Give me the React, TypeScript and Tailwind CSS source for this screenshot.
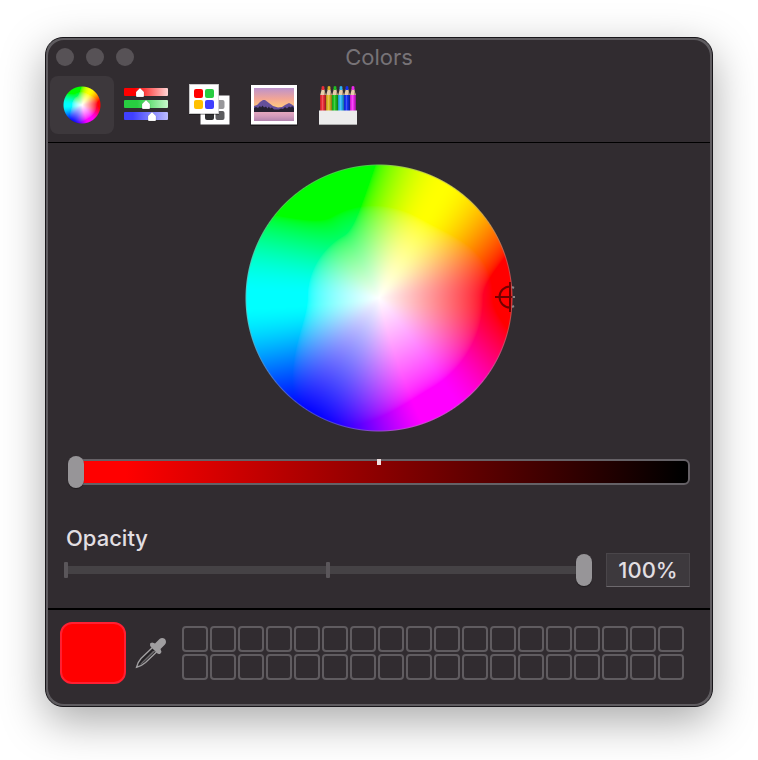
import React, { useEffect, useRef, useState } from 'react';

const clamp = (n: number) => Math.min(1, Math.max(0, n));
const smooth = (n: number) => n * n * (3 - 2 * n);
const toLinear = (c: number) => (c <= 0.04045 ? c / 12.92 : ((c + 0.055) / 1.055) ** 2.4);
const toGamma = (c: number) => (c <= 0.0031308 ? c * 12.92 : 1.055 * c ** (1 / 2.4) - 0.055);

// hue in degrees, saturation 0-1. The wheel is wide gamut (P3), clipped to sRGB
const wheelColor = (hue: number, sat: number) => {
  const channel = (n: number) => {
    const k = (n + hue / 60) % 6;
    return toLinear(1 - sat * smooth(clamp(Math.min(k, 4 - k))));
  };
  const r = channel(5);
  const g = channel(3);
  const b = channel(1);
  return [
    1.2249 * r - 0.2249 * g,
    -0.042 * r + 1.042 * g,
    -0.0196 * r - 0.0786 * g + 1.0982 * b,
  ].map(c => Math.round(toGamma(clamp(c)) * 255));
};

const ColorWheel: React.FC<{ size: number; ring?: number }> = ({ size, ring = 0 }) => {
  const ref = useRef<HTMLCanvasElement>(null);

  useEffect(() => {
    const ctx = ref.current?.getContext('2d');
    if (!ctx) return;
    const img = ctx.createImageData(size, size);
    const mid = size / 2;
    for (let y = 0; y < size; y++) {
      for (let x = 0; x < size; x++) {
        const dx = x + 0.5 - mid;
        const dy = mid - y - 0.5;
        const dist = Math.hypot(dx, dy);
        const hue = ((Math.atan2(dy, dx) * 180) / Math.PI + 360) % 360;
        const mix = ring * clamp(dist - mid + 2);
        const [r, g, b] = wheelColor(hue, Math.min(1, dist / mid)).map(c => c + (150 - c) * mix);
        img.data.set([r, g, b, clamp(mid - dist) * 255], (y * size + x) * 4);
      }
    }
    ctx.putImageData(img, 0, 0);
  }, [size, ring]);

  return <canvas ref={ref} width={size} height={size} />;
};

const SlidersIcon = () => (
  <svg width="44" height="36" viewBox="0 0 44 36">
    <defs>
      <linearGradient id="sr"><stop offset="0.25" stopColor="#ff0000" /><stop offset="1" stopColor="#ffd5d5" /></linearGradient>
      <linearGradient id="sg"><stop offset="0.3" stopColor="#28cd41" /><stop offset="1" stopColor="#c8f8cc" /></linearGradient>
      <linearGradient id="sb"><stop offset="0.2" stopColor="#4040ff" /><stop offset="1" stopColor="#bcbcff" /></linearGradient>
    </defs>
    <rect y="1" width="44" height="8" rx="1" fill="url(#sr)" />
    <rect y="13" width="44" height="8" rx="1" fill="url(#sg)" />
    <rect y="25" width="44" height="8" rx="1" fill="url(#sb)" />
    {[[16, 1], [22, 13], [28, 25]].map(([x, y]) => (
      <path key={x} d={`M${x} ${y}l4 4v4q0 1-1 1h-6q-1 0-1-1v-4z`} fill="#fff" stroke="#00000030" strokeWidth="0.6" />
    ))}
  </svg>
);

const PalettesIcon = () => (
  <svg width="44" height="44" viewBox="0 0 44 44">
    <rect x="12.500" y="12.500" width="29" height="29" fill="#fff" />
    <rect x="17" y="17" width="9" height="9" rx="2" fill="#bbb" />
    <rect x="27.500" y="17" width="9" height="9" rx="2" fill="#98989b" />
    <rect x="17" y="28" width="9" height="9" rx="2" fill="#303032" />
    <rect x="27.500" y="28" width="9" height="9" rx="2" fill="#5c5c5f" />
    <rect x="1" y="2" width="30" height="30" fill="#00000055" />
    <rect x="1.250" y="1.250" width="29.500" height="29.500" fill="#fff" stroke="#ccc" strokeWidth="0.5" />
    <rect x="6" y="6" width="9" height="9" rx="2" fill="#f00" />
    <rect x="17" y="6" width="9" height="9" rx="2" fill="#28cd41" />
    <rect x="6" y="17" width="9" height="9" rx="2" fill="#ffc000" />
    <rect x="17" y="17" width="9" height="9" rx="2" fill="#4040ff" />
  </svg>
);

const PhotoIcon = () => (
  <svg width="48" height="42" viewBox="0 0 48 42">
    <defs>
      <linearGradient id="sky" x2="0" y2="1">
        <stop offset="0" stopColor="#bd93cc" /><stop offset="0.45" stopColor="#f2a596" /><stop offset="0.85" stopColor="#ffcf7c" />
      </linearGradient>
      <linearGradient id="lake" x2="0" y2="1">
        <stop offset="0" stopColor="#e9abc0" /><stop offset="0.5" stopColor="#d39bbb" /><stop offset="1" stopColor="#b183ae" />
      </linearGradient>
    </defs>
    <rect x="0.500" y="1" width="47" height="41" fill="#1c191c" />
    <rect x="1" y="1" width="46" height="39.500" fill="#fff" />
    <rect x="4" y="4" width="40" height="24" fill="url(#sky)" />
    <rect x="4" y="27" width="40" height="10" fill="url(#lake)" />
    <path d="M4 22l3-1 3-3 3-2 2 0 4 3 4 3 5 1.500 4-0.500 3-2 4-2 2 1 3 2v6H4z" fill="#65509b" />
    <path d="M4 24l2-1 2 1 2-2 1 1.500 1.500-2 1.500 2 2-1 1.500 2 1.500-2 1 2 2-1 2 2h5l2-1 2 0.500 2-2 2 1.500 2-2 2 1 1-1.500 2 2v4H4z" fill="#252131" />
  </svg>
);

const pencils = ['#ea2e38', '#dcb424', '#20bf22', '#2bb4f0', '#1530f0', '#ef28ee'];

const PencilsIcon = () => (
  <svg width="40" height="42" viewBox="0 0 40 42">
    {pencils.map((color, i) => (
      <g key={color} transform={`translate(${2 + i * 6} 0)`}>
        <path d="M0 12L1.800 5h2.400L6 12z" fill="#e6cdaa" />
        <path d="M4 6l2 6h-2z" fill="#b5977a" />
        <path d="M1.600 6V2.800Q3 1 4.400 2.800V6z" fill={color} />
        <rect y="11" width="6" height="17" fill={color} />
        <rect x="4.500" y="11" width="1.500" height="17" fill="#00000050" />
        <rect x="0" y="11" width="1" height="17" fill="#00000025" />
        <rect x="2" y="11" width="1" height="17" fill="#ffffff30" />
      </g>
    ))}
    <rect x="1" y="26.500" width="38" height="14" fill="#ececec" />
    <rect x="1" y="40" width="38" height="1" fill="#aaa" />
  </svg>
);

const EyedropperIcon = () => (
  <svg width="32" height="32" viewBox="0 0 32 32">
    <path d="M18 10L6 21.500Q2.500 25.500 1.500 30.300Q6.500 29 10.500 25.500L22.500 14z" fill="#242124" stroke="#a09ea0" strokeWidth="1.400" />
    <path d="M18 14L8 24Q5.500 26.500 4.500 28Q7.500 26.500 9.500 24.500L20.500 14z" fill="#6a676a" />
    <path d="M15 6.500L17 5.500Q19 6 20 6.500L24.500 2Q27 0 30 2Q32 5 30 7.500L25.500 12L26.500 15L25 17Q23 17.500 21.500 15.500L16.500 10.500Q14.500 8.500 15 6.500z" fill="#a09ea0" />
  </svg>
);

const tabs = [
  { name: 'Color Wheel', icon: <ColorWheel size={38} /> },
  { name: 'Color Sliders', icon: <SlidersIcon /> },
  { name: 'Color Palettes', icon: <PalettesIcon /> },
  { name: 'Image Palettes', icon: <PhotoIcon /> },
  { name: 'Pencils', icon: <PencilsIcon /> },
];

const sliderClass =
  'col-start-1 row-start-1 z-10 h-8 w-full appearance-none bg-transparent outline-none [&::-webkit-slider-thumb]:h-8 [&::-webkit-slider-thumb]:w-4 [&::-webkit-slider-thumb]:appearance-none [&::-webkit-slider-thumb]:rounded-full [&::-webkit-slider-thumb]:bg-[#979598] [&::-webkit-slider-thumb]:shadow-[0_1px_1px_rgba(0,0,0,0.4)]';

const App: React.FC = () => {
  const [activeTab, setActiveTab] = useState('Color Wheel');
  const [brightness, setBrightness] = useState(0);
  const [opacity, setOpacity] = useState(100);

  return (
    <div className="min-h-screen bg-white px-[45px] pt-[37px] pb-[53px] font-['Inter','Liberation_Sans',sans-serif]">
      <main className="rounded-[18px] border border-[#18161a] bg-[#5f5c60] p-0.5 shadow-[0_14px_44px_rgba(0,0,0,0.34)]">
        <div className="overflow-hidden rounded-2xl bg-[#312c30]">
          <header className="border-b border-black pb-2">
            <div className="mb-0.5 grid h-[34px] grid-cols-3 items-center px-2">
              <div className="flex gap-3">
                <button aria-label="Close" className="h-[18px] w-[18px] rounded-full bg-[#575256]"></button>
                <button aria-label="Minimize" className="h-[18px] w-[18px] rounded-full bg-[#575256]"></button>
                <button aria-label="Zoom" className="h-[18px] w-[18px] rounded-full bg-[#575256]"></button>
              </div>
              <h1 className="text-center text-[22px] leading-7 text-[#777377]">Colors</h1>
            </div>
            <nav className="flex px-0.5">
              {tabs.map(tab => (
                <button
                  key={tab.name}
                  aria-label={tab.name}
                  onClick={() => setActiveTab(tab.name)}
                  className={`flex h-[58px] w-16 items-center justify-center rounded-lg ${activeTab === tab.name ? 'bg-[#3d383c]' : ''}`}
                >
                  {tab.icon}
                </button>
              ))}
            </nav>
          </header>

          <section className="px-5 pt-[21px]">
            <div className="relative mx-auto w-fit">
              <ColorWheel size={268} ring={0.5} />
              {/* Crosshair on the picked color */}
              <svg className="absolute top-[117px] left-[249px]" width="32" height="32" viewBox="0 0 32 32" fill="none">
                <path d="M16 1V31M1 16H18M16 5.500A10.500 10.500 0 0 0 16 26.500" stroke="#000" strokeOpacity="0.55" strokeWidth="2" />
                <path d="M18 6l2 1M19 16h2M18 26l2-1" stroke="#8a8589" strokeWidth="2" />
              </svg>
            </div>

            <div className="mt-6 grid items-center">
              <div className="col-start-1 row-start-1 flex h-[26px] justify-center rounded-md border-2 border-[#656166] bg-[linear-gradient(90deg,#f00_9%,#000_99%)]">
                <span className="-mt-0.5 h-1.5 w-1 bg-[#f0dede]"></span>
              </div>
              <input
                type="range"
                aria-label="Brightness"
                min={0}
                max={100}
                value={brightness}
                onChange={e => setBrightness(Number(e.target.value))}
                className={sliderClass}
              />
            </div>
          </section>

          <section className="pt-9 pr-5 pb-[21px] pl-4">
            <label htmlFor="opacity" className="block pl-0.5 text-[22px] leading-7 font-medium text-[#e2dfe2]">Opacity</label>
            <div className="mt-px flex items-center gap-3.5">
              <div className="grid flex-1 items-center">
                <div className="col-start-1 row-start-1 mx-0.5 h-2 bg-[#454245]"></div>
                <div className="col-start-1 row-start-1 flex h-4 justify-between">
                  <span className="w-1 rounded-[1px] bg-[#5a565a]"></span>
                  <span className="w-1 rounded-[1px] bg-[#5a565a]"></span>
                  <span className="w-1"></span>
                </div>
                <input
                  id="opacity"
                  type="range"
                  min={0}
                  max={100}
                  value={opacity}
                  onChange={e => setOpacity(Number(e.target.value))}
                  className={sliderClass}
                />
              </div>
              <input
                type="text"
                aria-label="Opacity value"
                value={`${opacity}%`}
                onChange={e => setOpacity(Math.min(100, parseInt(e.target.value) || 0))}
                className="h-[34px] w-[84px] border border-[#4a464a] border-b-[#6d696d] bg-[#3d393d] text-center text-[22px] leading-7 font-medium text-[#e2dfe2] outline-none"
              />
            </div>
          </section>

          <footer className="flex items-center border-t-2 border-black pt-3 pr-[26px] pb-5 pl-3">
            <button aria-label="Current color" className="h-[62px] w-[66px] rounded-xl border-2 border-[#ff2032] bg-[#ff0000]"></button>
            <button aria-label="Pick a color" className="ml-[9px]">
              <EyedropperIcon />
            </button>
            <div className="ml-[15px] grid flex-1 grid-cols-[repeat(18,minmax(0,1fr))] gap-0.5">
              {Array.from({ length: 36 }, (_, i) => (
                <button key={i} aria-label={`Swatch ${i + 1}`} className="h-[26px] rounded border-2 border-[#605c60]"></button>
              ))}
            </div>
          </footer>
        </div>
      </main>
    </div>
  );
};

export default App;
